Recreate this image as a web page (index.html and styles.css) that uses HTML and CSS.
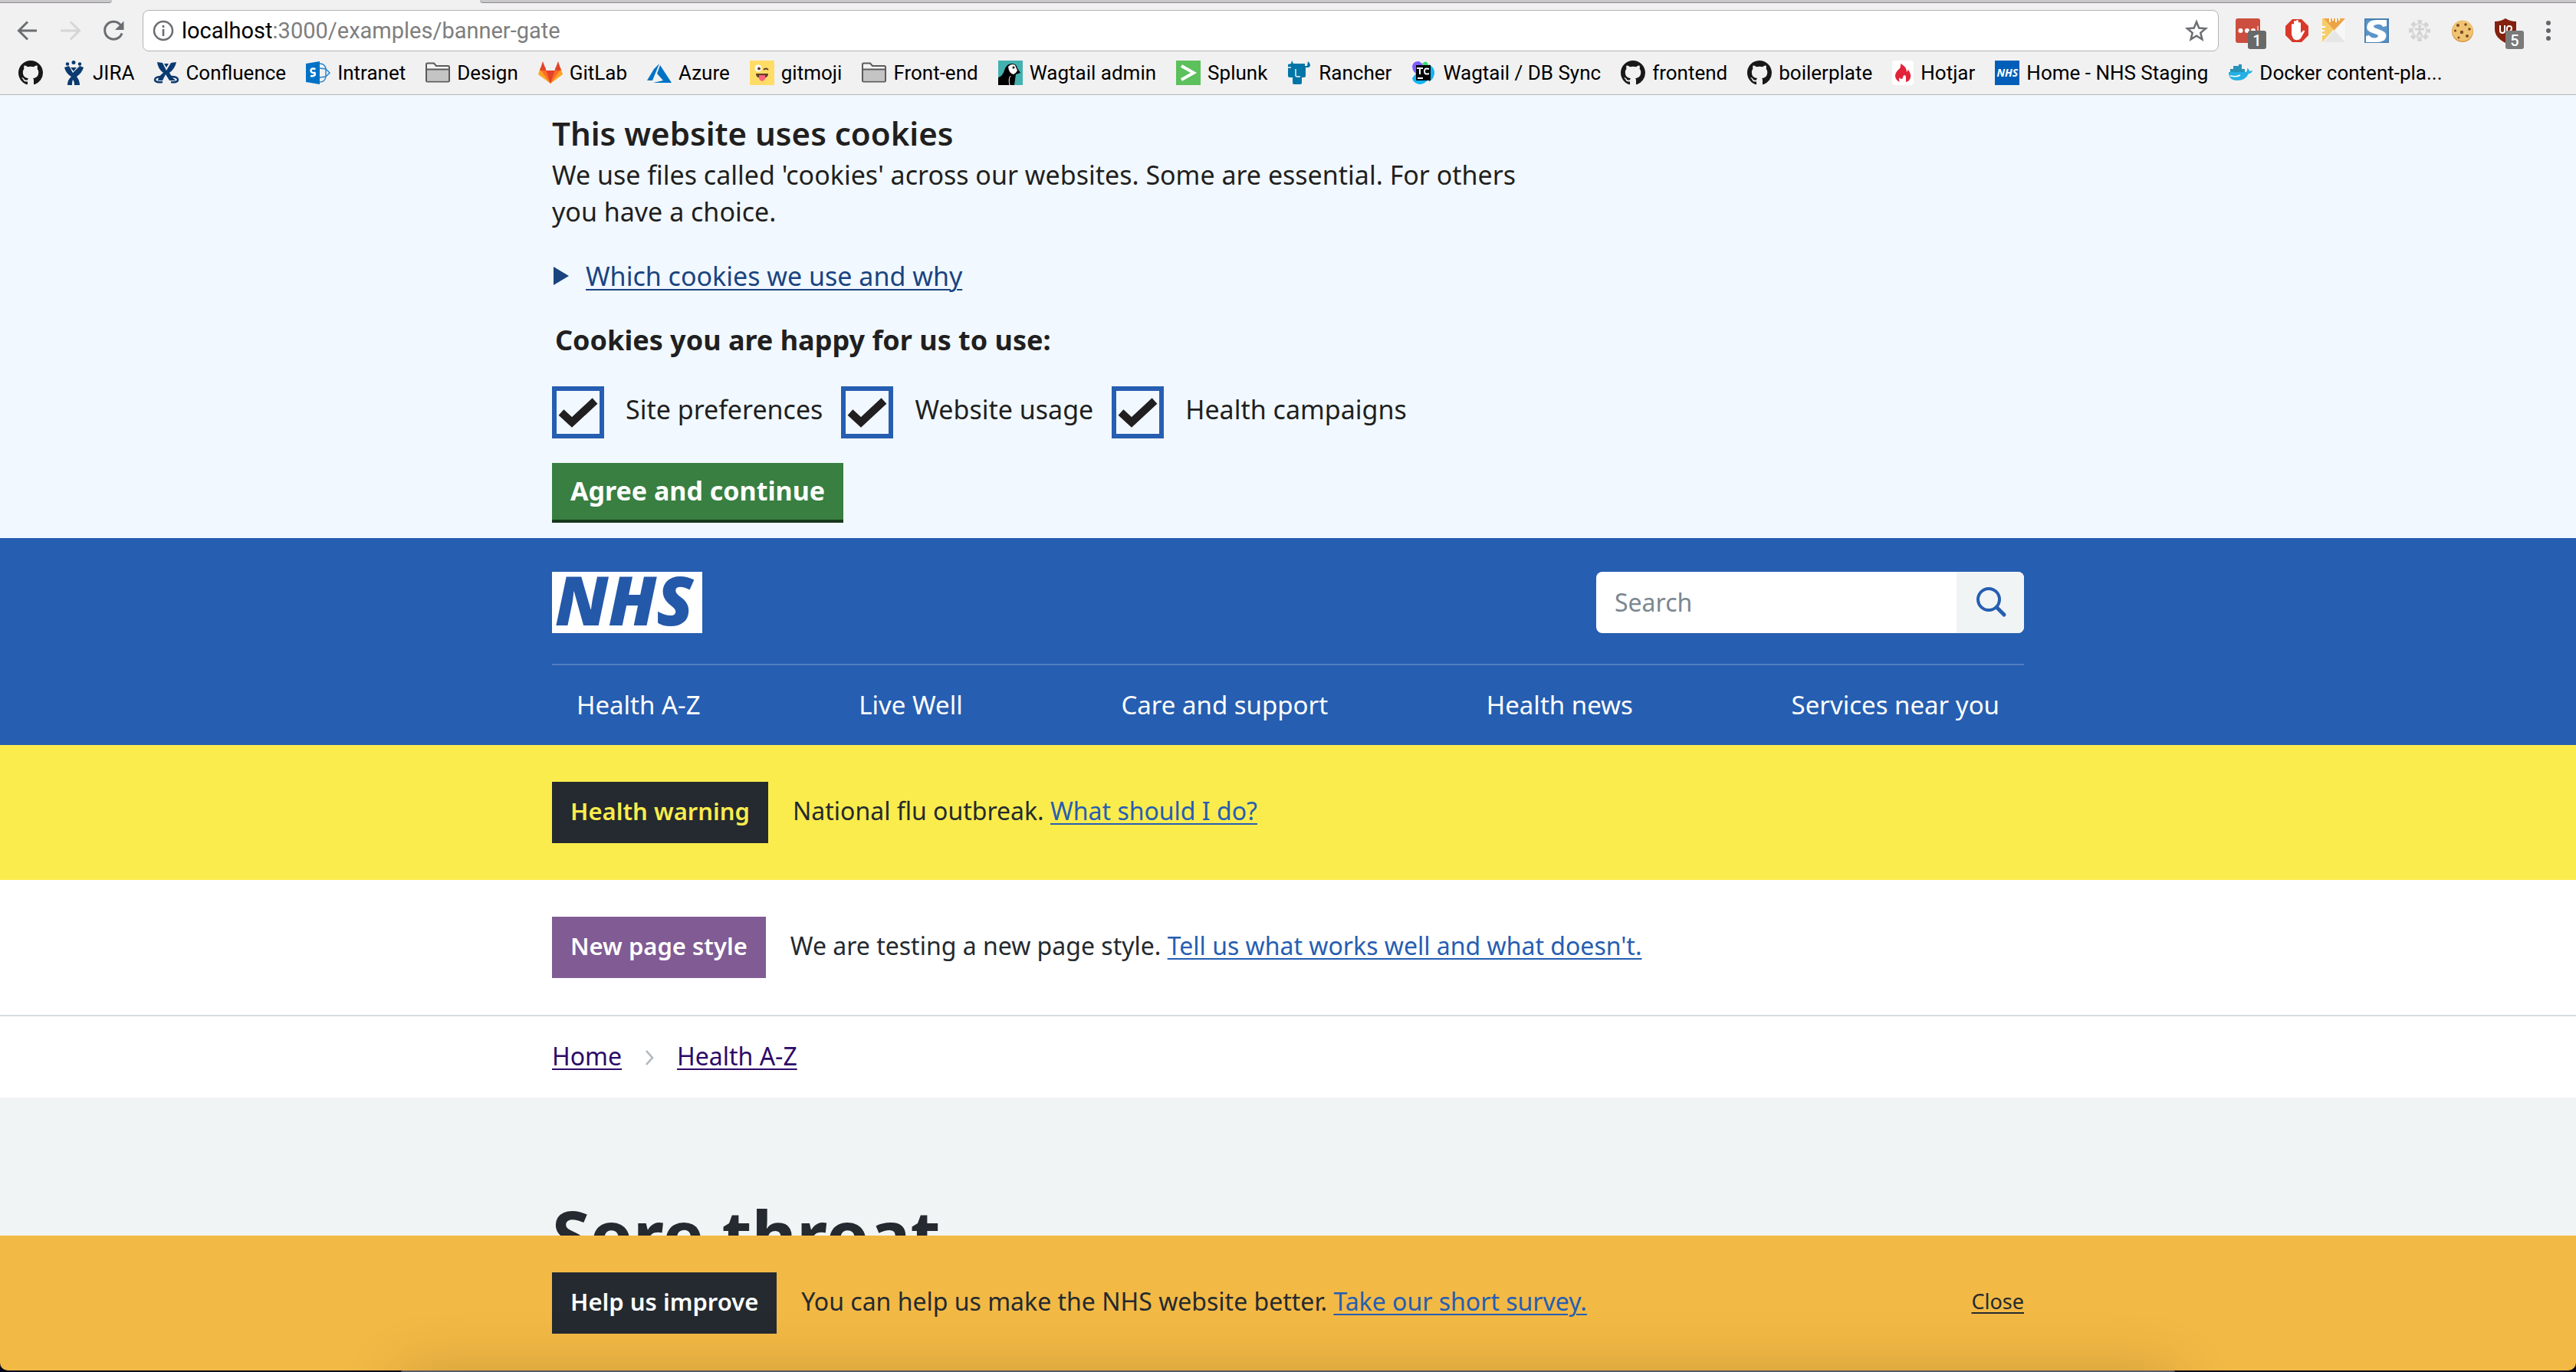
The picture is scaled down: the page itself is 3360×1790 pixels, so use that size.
FILE: index.html
```
<!DOCTYPE html>
<html lang="en">
<head>
<meta charset="utf-8">
<title>Sore throat - NHS</title>
<link rel="stylesheet" href="styles.css">
</head>
<body>
<svg class="defs" aria-hidden="true">
  <symbol id="github" viewBox="0 0 16 16"><path fill="#191717" d="M8 0C3.58 0 0 3.58 0 8c0 3.54 2.29 6.53 5.47 7.59.4.07.55-.17.55-.38 0-.19-.01-.82-.01-1.49-2.01.37-2.53-.49-2.69-.94-.09-.23-.48-.94-.82-1.13-.28-.15-.68-.52-.01-.53.63-.01 1.08.58 1.23.82.72 1.21 1.87.87 2.33.66.07-.52.28-.87.51-1.07-1.78-.2-3.64-.89-3.64-3.95 0-.87.31-1.59.82-2.15-.08-.2-.36-1.02.08-2.12 0 0 .67-.21 2.2.82.64-.18 1.32-.27 2-.27s1.36.09 2 .27c1.53-1.04 2.2-.82 2.2-.82.44 1.1.16 1.92.08 2.12.51.56.82 1.27.82 2.15 0 3.07-1.87 3.75-3.65 3.95.29.25.54.73.54 1.48 0 1.07-.01 1.93-.01 2.2 0 .21.15.46.55.38A8.01 8.01 0 0 0 16 8c0-4.42-3.58-8-8-8z"/></symbol>
  <symbol id="folder" viewBox="0 0 32 32"><path d="M1 26V5q0-1.500 1.500-1.500H11l3 3.500h15.500Q31 7 31 8.500V26q0 1.500-1.500 1.500h-27Q1 27.500 1 26z" fill="#f4f4f4" stroke="#5b5b5b" stroke-width="2"/><path d="M2 12h28v13.500q0 1-1 1H3q-1 0-1-1z" fill="#c4c4c4"/><path d="M1 11.500h30" stroke="#5b5b5b" stroke-width="2"/></symbol>
</svg>

<header class="browser">
  <div class="tabs"><span class="tab tab--first"></span><span class="tab tab--rest"></span></div>
  <div class="toolbar">
    <div class="toolbar__nav">
      <button type="button" aria-label="Back"><svg viewBox="0 0 32 32"><path d="M28 16H5M16 4.500L4.500 16 16 27.500" fill="none" stroke="#6a6d71" stroke-width="3"/></svg></button>
      <button type="button" aria-label="Forward"><svg viewBox="0 0 32 32"><path d="M3 16h24M16 4.500L27.500 16 16 27.500" fill="none" stroke="#d6d6d6" stroke-width="3"/></svg></button>
      <button type="button" aria-label="Reload"><svg viewBox="0 0 32 32"><path d="M25.500 9A11.500 11.500 0 1 0 27 19.500" fill="none" stroke="#6a6d71" stroke-width="3"/><path d="M29.500 3.500V15H18z" fill="#6a6d71"/></svg></button>
    </div>
    <div class="address">
      <svg class="address__info" viewBox="0 0 28 28"><circle cx="14" cy="14" r="12" fill="none" stroke="#6a6d71" stroke-width="2.500"/><path d="M14 12v9M14 7v3" stroke="#6a6d71" stroke-width="2.600"/></svg>
      <div class="address__url" role="textbox" aria-label="Address"><span class="address__host">localhost</span>:3000/examples/banner-gate</div>
      <button type="button" aria-label="Bookmark this page"><svg viewBox="0 0 32 32"><path d="M16 4.500l3.300 8.100 8.700.600-6.700 5.700 2.100 8.500L16 22.800l-7.400 4.600 2.100-8.500L4 13.200l8.700-.600z" fill="none" stroke="#6a6d71" stroke-width="2.500"/></svg></button>
    </div>
    <div class="extensions">
      <button type="button" aria-label="Passwords"><svg viewBox="0 0 32 32"><rect width="32" height="32" rx="3" fill="#cc4e3e"/><circle cx="6.500" cy="16" r="3" fill="#fff"/><circle cx="15" cy="16" r="3" fill="#fff"/><circle cx="23" cy="16" r="3" fill="#fff"/><path d="M29 10v8" stroke="#fff"/></svg><span class="badge">1</span></button>
      <button type="button" aria-label="Ad blocker"><svg viewBox="0 0 32 32"><path d="M18 1h12l9 9v12l-9 9H18l-9-9V10z" fill="#d9392b"/><path d="M17 20V8q1.500-2 3 0v8-12q1.500-2 3 0v11V3q1.500-2 3 0v12V6q1.500-2 3 0v13l3-3q2.500-1 2 1l-5 9q-3 3-7 2-4-1-5-8z" fill="#fff"/></svg></button>
      <button type="button" aria-label="Keep"><svg viewBox="0 0 32 32"><path d="M1 0h28L1 31z" fill="#f6cd6a"/><path d="M3 0h28L17 16z" fill="#eea346"/><path d="M17 15l14 16H3z" fill="#e6e6e6"/><path d="M31 1v30L17 15z" fill="#f7f7f7"/><path d="M11 0v5M15 0v3M19 0v5M23 0v3M0 11h5M0 16h4M0 21h5" stroke="#fff" stroke-width="2"/></svg></button>
      <button type="button" aria-label="Stylish"><svg viewBox="0 0 32 32"><rect x="1" y="1" width="30" height="30" fill="#5c96c8" stroke="#4a81b3" stroke-width="2"/><path d="M29 2v8l-5 1q-2-4-8-3-6 1-3 4l10 4q7 3 5 9-2 6-12 6H2v-8l4-1q4 5 10 3 4-2 0-4L8 18Q1 15 4 8 6 2 16 2z" fill="#fff"/></svg></button>
      <button type="button" aria-label="Accessibility"><svg viewBox="0 0 32 32"><circle cx="16" cy="16" r="10" fill="#d2d2d2"/><circle cx="16" cy="16" r="12" fill="none" stroke="#d2d2d2" stroke-width="4" stroke-dasharray="5.425 4" stroke-dashoffset="2.700"/><circle cx="16" cy="16" r="8.500" fill="#f1f1f1"/><circle cx="16" cy="10.500" r="2" fill="#cfcfcf"/><path d="M10 14h12M16 13v5M16 17l-3 6M16 17l3 6" stroke="#cfcfcf" stroke-width="2.500"/></svg></button>
      <button type="button" aria-label="Cookie editor"><svg viewBox="0 0 32 32"><circle cx="16" cy="17" r="14" fill="#d9953c"/><circle cx="16" cy="16" r="13.500" fill="#f0c373"/><g fill="#7a4a20"><circle cx="10" cy="9" r="2"/><circle cx="20" cy="8" r="1.800"/><circle cx="25" cy="14" r="1.800"/><circle cx="15" cy="18" r="2.200"/><circle cx="6.500" cy="16" r="1.600"/><circle cx="22" cy="23" r="2"/><circle cx="11" cy="25" r="1.500"/></g></svg></button>
      <button type="button" aria-label="Content blocker"><svg viewBox="0 0 32 32"><path d="M16 0q6 4 14 4v10q0 11-14 18Q2 25 2 14V4q8 0 14-4z" fill="#83200f"/><path d="M9 9v7q0 3 3 3t3-3V9M18 22V13q0-3 3-3t3 3-3 4" fill="none" stroke="#fff" stroke-width="2"/></svg><span class="badge badge--light">5</span></button>
      <button type="button" aria-label="Menu"><svg viewBox="0 0 32 32" fill="#626569"><circle cx="16" cy="6" r="3"/><circle cx="16" cy="16" r="3"/><circle cx="16" cy="26" r="3"/></svg></button>
    </div>
  </div>
  <nav class="bookmarks" aria-label="Bookmarks">
    <a href="#" aria-label="GitHub"><svg><use href="#github"/></svg></a>
    <a href="#"><svg viewBox="0 0 32 32" fill="#0b3a70"><circle cx="8" cy="4.500" r="2.200"/><circle cx="16" cy="2.500" r="2.500"/><circle cx="24" cy="4.500" r="2.200"/><path d="M4 9l6-2 5 9 9-9 5 2q-2 7-9 12 4 5 4 11h-7q0-5-2-7-1 2-1 7H8q0-7 5-11Q6 17 4 9z"/><path d="M12 9h8l-4 5z"/></svg><span>JIRA</span></a>
    <a href="#"><svg viewBox="0 0 32 32" fill="#0b3a70"><path d="M4 2l7 1 5 10 6-10 7-1q-2 9-9 14 3 6 8 10H20l-5-8-4 8H5q1-6 7-10Q5 11 4 2z"/><path d="M13 4h6l-3 5z"/><path d="M11 21q-10 0-10 4t10 3M22 21q9 0 9 4t-9 3" fill="none" stroke="#0b3a70" stroke-width="2.500"/></svg><span>Confluence</span></a>
    <a href="#"><svg viewBox="0 0 32 32"><path d="M18 4q7 0 8 7l5 5-5 5q-1 7-8 7M18 10l8 1v10l-8 1" fill="none" stroke="#2584d0" stroke-width="1.500"/><path d="M0 4l18-3v30L0 28z" fill="#0072c6"/><path d="M12.500 11q-6-1.500-6 2t5 3q1.500 5-5.500 4" fill="none" stroke="#fff" stroke-width="2.500"/></svg><span>Intranet</span></a>
    <a href="#"><svg><use href="#folder"/></svg><span>Design</span></a>
    <a href="#"><svg viewBox="0 0 32 32"><path d="M16 30L0 18l3-9h26l3 9z" fill="#fca326"/><path d="M16 30L3 12h26z" fill="#fc6d26"/><path d="M16 30L10 12h12z" fill="#e24329"/><path d="M10 9h12v4H10z" fill="#f1f1f1"/><path d="M6 1l4.500 12H2zM26 1l4 12h-8.500z" fill="#e24329"/></svg><span>GitLab</span></a>
    <a href="#"><svg viewBox="0 0 32 32"><path d="M16 4L9 11 0 26h7zM17 6l-4 11 8 9-13 3h24z" fill="#0072c6"/></svg><span>Azure</span></a>
    <a href="#"><svg viewBox="0 0 32 32"><rect width="32" height="32" fill="#ffdc66"/><circle cx="11" cy="10" r="4.500" fill="#fff"/><circle cx="12" cy="10.500" r="2" fill="#5c4024"/><path d="M18 12q3-3 6 0" fill="none" stroke="#5c4024" stroke-width="2"/><path d="M8 17h16q0 6-8 6t-8-6z" fill="#5c4024"/><path d="M12 19h8v5q-4 6-8 0z" fill="#fb6180"/></svg><span>gitmoji</span></a>
    <a href="#"><svg><use href="#folder"/></svg><span>Front-end</span></a>
    <a href="#"><svg viewBox="0 0 32 32"><rect width="32" height="32" fill="#43b1b0"/><path d="M0 32V22q6-1 9-12 3-6 9-6 6 0 7 6l4 6-6 2-2 14z" fill="#000"/><path d="M13 8q4-5 9-2l3 7q-2 4-5 5-6-1-7-10z" fill="#fff"/><circle cx="20" cy="9" r="1.500"/><path d="M15 32q-2-8 1-12" stroke="#fff" fill="none"/></svg><span>Wagtail admin</span></a>
    <a href="#"><svg viewBox="0 0 32 32"><rect width="32" height="32" fill="#5cc05c"/><path d="M7 7l16 9L7 25" fill="none" stroke="#fff" stroke-width="4"/></svg><span>Splunk</span></a>
    <a href="#"><svg viewBox="0 0 32 32"><path d="M1 5l4-1 1-4 2 4h15v3h3l1-6q3 2 3 6l-2 2h-4v11q0 2-2 2h-3v7q0 2-2 2H9q-2 0-2-2v-7H3q-2 0-2-2z" fill="#0075a8"/><path d="M1 9h4M11 11v8q0 2 2 2h4" fill="none" stroke="#f1f1f1" stroke-width="1.500"/></svg><span>Rancher</span></a>
    <a href="#"><svg viewBox="0 0 32 32"><path d="M1 7q2-7 9-6l5 4-9 12q-5-3-5-10z" fill="#7c5cff"/><path d="M14 4q6-6 8 2v8z" fill="#2fe070"/><path d="M23 5q7 4 7 11t-7 12zM1 23l8-10 12 13q-7 7-14 4-5-2-6-7z" fill="#10b4f4"/><rect x="6" y="6" width="19" height="20"/><path d="M7 10h8M11 10v8M23 11q-6-2-6 3t6 3M8 23h7" fill="none" stroke="#fff" stroke-width="2"/></svg><span>Wagtail / DB Sync</span></a>
    <a href="#"><svg><use href="#github"/></svg><span>frontend</span></a>
    <a href="#"><svg><use href="#github"/></svg><span>boilerplate</span></a>
    <a href="#"><svg class="narrow" viewBox="0 0 28 32"><rect width="28" height="32" rx="4" fill="#fff"/><path d="M11 4q8 4 8 11l2-3q4 6 3 10-1 5-6 6v-5q0-4-2-4-2 1-2 3t-2 2-2-2q-2 2 0 6-6-3-6-8 0-4 4-8 4-3 3-8z" fill="#e2243b"/></svg><span>Hotjar</span></a>
    <a href="#"><i class="nhs-mini">NHS</i><span>Home - NHS Staging</span></a>
    <a href="#"><svg viewBox="0 0 32 32"><path d="M2 15h20q4 0 3-5 3 1 3 4l4-1q-1 4-5 4-4 9-15 9Q1 26 1 15z" fill="#24b0e4"/><path d="M3 11h19v4H3zM7 7h11v4H7zM14 5h4v3h-4z" fill="#2694b8"/><path d="M3 20q8 2 13-1" stroke="#fff" fill="none" stroke-width="1.500"/></svg><span>Docker content-pla...</span></a>
  </nav>
</header>

<section class="cookies">
  <form class="container" onsubmit="return false">
    <h2>This website uses cookies</h2>
    <p>We use files called 'cookies' across our websites. Some are essential. For others you have a choice.</p>
    <details><summary><svg viewBox="0 0 20 24"><path d="M0 0l20 12L0 24z" fill="#1a4480"/></svg><span>Which cookies we use and why</span></summary></details>
    <fieldset>
      <legend>Cookies you are happy for us to use:</legend>
      <div class="choices">
        <label><input type="checkbox" checked><span>Site preferences</span></label>
        <label><input type="checkbox" checked><span>Website usage</span></label>
        <label><input type="checkbox" checked><span>Health campaigns</span></label>
      </div>
    </fieldset>
    <button type="submit" class="agree">Agree and continue</button>
  </form>
</section>

<header class="site-header">
  <div class="container">
    <div class="site-header__top">
      <a class="logo" href="#">NHS</a>
      <form class="search" onsubmit="return false">
        <input type="search" placeholder="Search" aria-label="Search">
        <button type="submit" aria-label="Search"><svg viewBox="0 0 40 40"><circle cx="18" cy="16" r="14" fill="none" stroke="#265eb1" stroke-width="4"/><path d="M28.500 26.500L38 36" stroke="#265eb1" stroke-width="5" stroke-linecap="round"/></svg></button>
      </form>
    </div>
    <nav class="site-nav">
      <a href="#">Health A-Z</a><a href="#">Live Well</a><a href="#">Care and support</a><a href="#">Health news</a><a href="#">Services near you</a>
    </nav>
  </div>
</header>

<section class="notice notice--warning">
  <div class="container"><strong>Health warning</strong><p>National flu outbreak. <a href="#">What should I do?</a></p></div>
</section>
<section class="notice notice--beta">
  <div class="container"><strong>New page style</strong><p>We are testing a new page style. <a href="#">Tell us what works well and what doesn't.</a></p></div>
</section>
<nav class="breadcrumb" aria-label="Breadcrumb">
  <div class="container"><a href="#">Home</a><svg viewBox="0 0 12 20"><path d="M2 3l8 9-8 9" fill="none" stroke="#aeb7bd" stroke-width="2.500"/></svg><a href="#">Health A-Z</a></div>
</nav>
<main>
  <div class="container"><h1>Sore throat</h1></div>
</main>

<aside class="survey">
  <div class="notice notice--survey">
    <div class="container"><strong>Help us improve</strong><p>You can help us make the NHS website better. <a href="#">Take our short survey.</a></p><button type="button" class="close">Close</button></div>
  </div>
  <div class="dock"></div>
</aside>
</body>
</html>
```
FILE: styles.css
```
* { box-sizing: border-box; }
body {
  margin: 0;
  height: 100vh;
  overflow: hidden;
  background: #fff;
  color: #242a2f;
  font: 32px/48px "Noto Sans", sans-serif;
}
h1, h2, p, fieldset, legend { margin: 0; padding: 0; border: 0; }
button { padding: 0; border: 0; background: none; color: inherit; font: inherit; cursor: pointer; }
a { color: #265eb1; text-decoration-thickness: 2px; text-underline-offset: 4px; }
svg { display: block; overflow: visible; }
.defs { display: none; }
.container { max-width: 1920px; margin: 0 auto; }

/* Browser window */
.browser {
  background: #f1f1f1;
  border-bottom: 1px solid #b3b3b3;
  font: 26px/32px Roboto, sans-serif;
  color: #000;
}
.tabs { display: flex; justify-content: space-between; height: 4px; gap: 480px; }
.tab { background: #cac8cb; border-bottom: 1px solid #8b898c; }
.tab--first { width: 146px; border-radius: 0 0 4px 0; }
.tab--rest { flex: 1; border-radius: 0 0 0 4px; }
.toolbar { display: flex; align-items: center; gap: 22px; padding: 9px 20px 0; }
.toolbar svg { width: 32px; height: 32px; }
.toolbar__nav, .extensions { display: flex; gap: 24px; }
.extensions button { position: relative; }
.address {
  flex: 1;
  display: flex;
  align-items: center;
  height: 54px;
  padding: 0 12px;
  border: 1px solid #b3b3b3;
  border-radius: 8px;
  background: #fff;
}
.toolbar .address__info { width: 28px; height: 28px; }
.address__url { flex: 1; padding-left: 10px; color: #7e7e7e; font-size: 29px; }
.address__host { color: #000; }
.badge {
  position: absolute;
  left: 16px;
  top: 16px;
  width: 24px;
  height: 24px;
  border-radius: 3px;
  background: #696969;
  color: #fff;
  font: 500 20px/26px Roboto, sans-serif;
}
.badge--light { background: #7a7a7a; }
.bookmarks { display: flex; align-items: center; gap: 24px; height: 56px; padding: 0 24px; white-space: nowrap; }
.bookmarks a { display: flex; gap: 8px; color: inherit; text-decoration: none; }
.bookmarks svg { width: 32px; height: 32px; }
.bookmarks .narrow { width: 28px; }
.bookmarks span { padding: 0 2px 0 1px; }
.nhs-mini { width: 32px; background: #005eb8; color: #fff; font: italic 700 14px/32px "Noto Sans", sans-serif; text-align: center; }

/* Cookie banner */
.cookies { padding: 22px 0 20px; background: #f1f8ff; color: #211f20; }
.cookies h2 { font-size: 42px; line-height: 56px; font-weight: 600; }
.cookies p, .cookies summary { font-size: 34px; }
.cookies p { max-width: 1280px; padding-top: 2px; }
.cookies details { margin: 36px 0; }
.cookies summary { display: flex; align-items: center; gap: 22px; padding-left: 2px; color: #1a4480; list-style: none; }
.cookies summary span { text-decoration: underline 2px; text-underline-offset: 4px; }
.cookies summary svg { width: 20px; height: 24px; }
.cookies legend { padding-left: 4px; font-size: 36px; font-weight: 700; }
.choices { display: flex; gap: 24px; margin: 36px 0 32px; }
.choices label { display: flex; gap: 28px; font-size: 34px; }
.choices span { padding-top: 6px; }
.choices input {
  appearance: none;
  width: 68px;
  height: 68px;
  margin: 0;
  border: 6px solid #265eb1;
  background: url("data:image/svg+xml,%3Csvg xmlns='http://www.w3.org/2000/svg' viewBox='0 0 56 56'%3E%3Cpath d='M6 28l14 13L50 13' fill='none' stroke='%23211f20' stroke-width='10'/%3E%3C/svg%3E") center / 56px no-repeat;
}
.agree {
  display: block;
  padding: 12px 24px 14px;
  border-bottom: 4px solid #17391c;
  background: #387f41;
  color: #fff;
  font-size: 34px;
  font-weight: 700;
}

/* Site header */
.site-header { padding-top: 44px; background: #265eb1; }
.site-header__top { display: flex; justify-content: space-between; padding-bottom: 40px; border-bottom: 2px solid #517ec1; }
.logo {
  width: 196px;
  height: 80px;
  padding-left: 4px;
  background: #fff;
  color: #2459a9;
  font: italic 900 88px/72px "Noto Sans", sans-serif;
  text-decoration: none;
}
.search { display: flex; width: 558px; height: 80px; border-radius: 8px; background: #fff; overflow: hidden; }
.search input { flex: 1; min-width: 0; padding: 0 24px; border: 0; background: none; font: 32px/48px "Noto Sans", sans-serif; }
.search input::placeholder { color: #7b8790; }
.search button { display: grid; place-items: center; width: 88px; background: #f0f4f5; }
.search svg { width: 40px; height: 40px; }
.site-nav { display: flex; justify-content: space-between; padding: 28px 32px; }
.site-nav a { color: #fff; font-size: 33px; text-decoration: none; }

/* Notices */
.notice { padding: 48px 0; }
.notice .container { display: flex; gap: 32px; }
.notice strong { padding: 14px 24px 18px; background: #242a2f; color: #fff; font-size: 31px; font-weight: 600; }
.notice p { padding: 14px 0 18px; }
.notice--warning { background: #fbec4d; }
.notice--warning strong { color: #fbec4d; }
.notice--beta { border-bottom: 2px solid #d8dde0; }
.notice--beta strong { background: #805b94; }
.notice--survey { border-radius: 0 0 10px 10px; background: #f3b945; }

.breadcrumb { padding: 28px 0 30px; }
.breadcrumb .container { display: flex; align-items: center; gap: 30px; }
.breadcrumb a { color: #2d0a68; }
.breadcrumb svg { width: 12px; height: 20px; }

main { padding: 124px 0; background: #f0f4f5; }
h1 { font-size: 90px; line-height: 108px; font-weight: 700; }

/* Survey bar over the page, with the dock peeking in below */
.survey { position: fixed; left: 0; right: 0; bottom: 0; padding-bottom: 2px; background: #05051a; overflow: hidden; }
.survey .close { margin-left: auto; padding: 14px 0 18px; font-size: 27px; text-decoration: underline 2px; text-underline-offset: 4px; }
.dock {
  position: absolute;
  left: 522px;
  right: 522px;
  bottom: -98px;
  height: 100px;
  border-radius: 4px;
  background: #5b5963;
  box-shadow: 0 0 80px rgba(0, 0, 0, .16);
}
```
